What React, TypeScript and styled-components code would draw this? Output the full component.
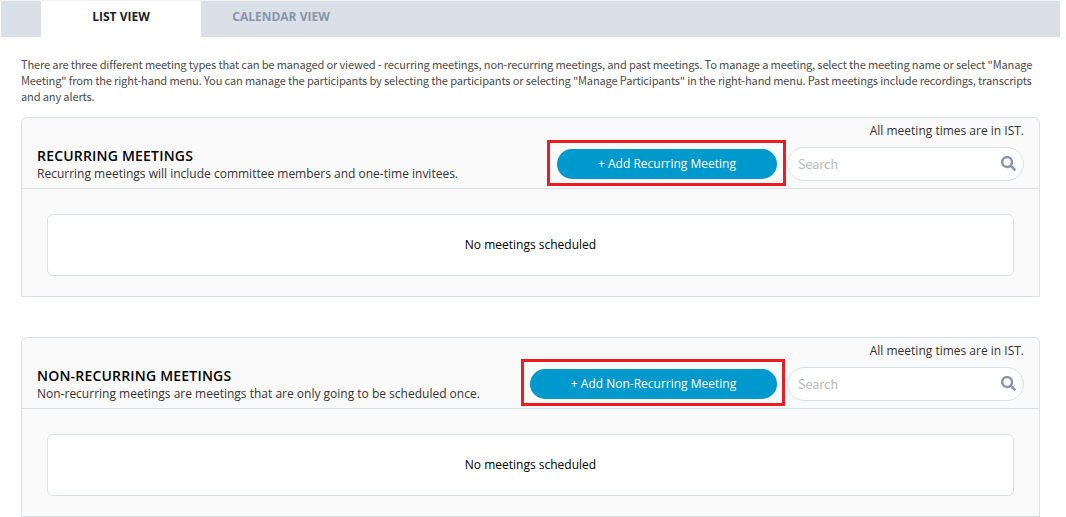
import React from "react";
import styled, { createGlobalStyle } from "styled-components";
import { FaSearch } from "react-icons/fa";

const GlobalStyle = createGlobalStyle`
  * { box-sizing: border-box; }
  body {
    margin: 0;
    background: #fff;
    overflow: hidden;
    font-family: "Open Sans", "Noto Sans", sans-serif;
    font-size: 12px;
    color: #333;
  }
`;

const Page = styled.div`
  width: 1060px;
  height: 517px;
  border-top: 1px solid #f3f3f3;
`;

const TabBar = styled.nav`
  display: flex;
  height: 36px;
  margin-left: 1px;
  padding-left: 40px;
  background: #d9e0e7;
`;

const Tab = styled.button<{ $active?: boolean }>`
  width: 160px;
  padding: 0 0 4px;
  border: 0;
  background: ${(p) => (p.$active ? "#fff" : "transparent")};
  color: ${(p) => (p.$active ? "#1c1f24" : "#8995a9")};
  font: 700 12px/16px "Open Sans", sans-serif;
`;

const Content = styled.main`
  padding: 19px 20px 0 21px;
`;

const Intro = styled.p`
  margin: 0 0 13px;
  color: #4c4c4c;
  font: 400 11.1px/16px "Noto Sans CJK SC", sans-serif;
  letter-spacing: -0.165px;
`;

const IntroLine = styled.span`
  display: block;
  white-space: nowrap;
`;

const Panel = styled.section`
  height: 180px;
  margin-bottom: 40px;
  border: 1px solid #d9e0e9;
  border-radius: 6px 6px 0 0;
  background: #fafafa;
`;

const PanelHeader = styled.header`
  display: flex;
  justify-content: space-between;
  height: 71px;
  padding: 0 15px;
  border-bottom: 1px solid #d9e0e9;
`;

const Heading = styled.div`
  padding-top: 29px;
`;

const Title = styled.h2`
  margin: 0;
  color: #000;
  font: 600 14px/18px "Open Sans", sans-serif;
  letter-spacing: 0.2px;
  white-space: nowrap;
`;

const Description = styled.p`
  margin: 0;
  line-height: 18px;
  white-space: nowrap;
`;

const Controls = styled.div`
  display: flex;
  flex-direction: column;
  align-items: flex-end;
`;

const Timezone = styled.div`
  height: 29px;
  line-height: 26px;
`;

const Actions = styled.div`
  display: flex;
  align-items: center;
  gap: 10px;
`;

const ButtonWrap = styled.div`
  position: relative;
`;

const AddButton = styled.button<{ $width: number }>`
  display: block;
  width: ${(p) => p.$width}px;
  height: 30px;
  padding: 0;
  border: 0;
  border-radius: 15px;
  background: #0099cd;
  color: #fff;
  font: 400 12px/16px "Open Sans", sans-serif;
`;

const Highlight = styled.span<{ $inset: string }>`
  position: absolute;
  inset: ${(p) => p.$inset};
  border: 3px solid #ed1c24;
  pointer-events: none;
`;

const SearchBox = styled.label`
  display: flex;
  align-items: center;
  width: 237px;
  height: 34px;
  padding: 0 7px 0 10px;
  border: 1px solid #d9e0e9;
  border-radius: 17px;
  background: #fff;
  color: #8494ab;

  svg {
    flex: none;
    margin-bottom: 2px;
  }
`;

const SearchInput = styled.input`
  flex: 1;
  min-width: 0;
  padding: 0;
  border: 0;
  outline: 0;
  background: transparent;
  font: 400 12.6px/18px "Noto Sans CJK SC", sans-serif;

  &::placeholder {
    color: #b9b9b9;
    opacity: 1;
  }
`;

const EmptyState = styled.div`
  display: flex;
  align-items: center;
  justify-content: center;
  height: 62px;
  margin: 25px 25px 0;
  padding-bottom: 1px;
  border: 1px solid #d9e0e9;
  border-radius: 6px;
  background: #fff;
  color: #000;
`;

const introLines = [
  'There are three different meeting types that can be managed or viewed - recurring meetings, non-recurring meetings, and past meetings. To manage a meeting, select the meeting name or select "Manage',
  'Meeting" from the right-hand menu. You can manage the participants by selecting the participants or selecting "Manage Participants" in the right-hand menu. Past meetings include recordings, transcripts',
  "and any alerts.",
];

const sections = [
  {
    title: "RECURRING MEETINGS",
    description: "Recurring meetings will include committee members and one-time invitees.",
    action: "+ Add Recurring Meeting",
    width: 220,
    inset: "-9px -9px -7px -10px",
  },
  {
    title: "NON-RECURRING MEETINGS",
    description: "Non-recurring meetings are meetings that are only going to be scheduled once.",
    action: "+ Add Non-Recurring Meeting",
    width: 247,
    inset: "-10px -8px -7px -9px",
  },
];

export default function App() {
  return (
    <>
      <GlobalStyle />
      <Page>
        <TabBar>
          <Tab $active>LIST VIEW</Tab>
          <Tab>CALENDAR VIEW</Tab>
        </TabBar>
        <Content>
          <Intro>
            {introLines.map((line) => (
              <IntroLine key={line}>{line}</IntroLine>
            ))}
          </Intro>
          {sections.map((s) => (
            <Panel key={s.title}>
              <PanelHeader>
                <Heading>
                  <Title>{s.title}</Title>
                  <Description>{s.description}</Description>
                </Heading>
                <Controls>
                  <Timezone>All meeting times are in IST.</Timezone>
                  <Actions>
                    <ButtonWrap>
                      <AddButton $width={s.width}>{s.action}</AddButton>
                      <Highlight $inset={s.inset} />
                    </ButtonWrap>
                    <SearchBox>
                      <SearchInput placeholder="Search" />
                      <FaSearch size={15} />
                    </SearchBox>
                  </Actions>
                </Controls>
              </PanelHeader>
              <EmptyState>No meetings scheduled</EmptyState>
            </Panel>
          ))}
        </Content>
      </Page>
    </>
  );
}
